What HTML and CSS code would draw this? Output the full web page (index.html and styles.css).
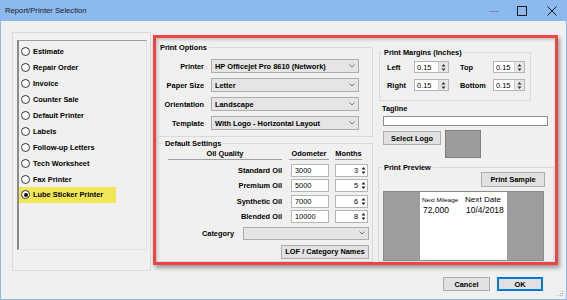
FILE: index.html
```html
<!DOCTYPE html>
<html lang="en">
<head>
    <meta charset="UTF-8">
    <title>Report/Printer Selection</title>
    <link rel="stylesheet" href="styles.css">
</head>
<body>

<div class="window">
    <div class="titlebar">
        <span class="title">Report/Printer Selection</span>
        <span class="ctl ctl-min"><svg width="10" height="10" viewBox="0 0 10 10"><path d="M0 5.5H10" stroke="#6f8fb8" stroke-width="1"/></svg></span>
        <span class="ctl"><svg width="10" height="10" viewBox="0 0 10 10"><rect x="0.5" y="0.5" width="9" height="9" fill="none" stroke="#1a1a1a" stroke-width="1"/></svg></span>
        <span class="ctl ctl-close"><svg width="10" height="10" viewBox="0 0 10 10"><path d="M0.5 0.5L9.5 9.5M9.5 0.5L0.5 9.5" stroke="#1a1a1a" stroke-width="1"/></svg></span>
    </div>

    <div class="client">
        <div class="main">
            <!-- report list -->
            <div class="report-group">
                <ul class="report-list">
                    <li><span class="radio"></span>Estimate</li>
                    <li><span class="radio"></span>Repair Order</li>
                    <li><span class="radio"></span>Invoice</li>
                    <li><span class="radio"></span>Counter Sale</li>
                    <li><span class="radio"></span>Default Printer</li>
                    <li><span class="radio"></span>Labels</li>
                    <li><span class="radio"></span>Follow-up Letters</li>
                    <li><span class="radio"></span>Tech Worksheet</li>
                    <li><span class="radio"></span>Fax Printer</li>
                    <li class="highlight"><span class="radio checked"></span>Lube Sticker Printer</li>
                </ul>
            </div>

            <!-- options panel (marked in red) -->
            <div class="options-panel">
                <div class="col-left">
                    <fieldset class="group print-options">
                        <legend>Print Options</legend>
                        <div class="po-grid">
                            <label>Printer</label>
                            <div class="select">HP Officejet Pro 8610 (Network)<svg class="chev" width="6" height="4" viewBox="0 0 6 4"><path d="M0.5 0.5L3 3L5.5 0.5" fill="none" stroke="#666" stroke-width="0.9"/></svg></div>
                            <label>Paper Size</label>
                            <div class="select">Letter<svg class="chev" width="6" height="4" viewBox="0 0 6 4"><path d="M0.5 0.5L3 3L5.5 0.5" fill="none" stroke="#666" stroke-width="0.9"/></svg></div>
                            <label>Orientation</label>
                            <div class="select">Landscape<svg class="chev" width="6" height="4" viewBox="0 0 6 4"><path d="M0.5 0.5L3 3L5.5 0.5" fill="none" stroke="#666" stroke-width="0.9"/></svg></div>
                            <label>Template</label>
                            <div class="select">With Logo - Horizontal Layout<svg class="chev" width="6" height="4" viewBox="0 0 6 4"><path d="M0.5 0.5L3 3L5.5 0.5" fill="none" stroke="#666" stroke-width="0.9"/></svg></div>
                        </div>
                    </fieldset>

                    <fieldset class="group defaults">
                        <legend>Default Settings</legend>
                        <div class="oil-grid">
                            <div class="head head-oil">Oil Quality</div>
                            <div class="head head-odo">Odometer</div>
                            <div class="head head-mo">Months</div>

                            <label>Standard Oil</label>
                            <div class="field odo">3000</div>
                            <div class="field months">3<svg class="spin" width="5" height="9" viewBox="0 0 5 9"><path d="M2.5 1L4.5 3.4H0.5Z M2.5 8L4.5 5.6H0.5Z" fill="#222"/></svg></div>

                            <label>Premium Oil</label>
                            <div class="field odo">5000</div>
                            <div class="field months">5<svg class="spin" width="5" height="9" viewBox="0 0 5 9"><path d="M2.5 1L4.5 3.4H0.5Z M2.5 8L4.5 5.6H0.5Z" fill="#222"/></svg></div>

                            <label>Synthetic Oil</label>
                            <div class="field odo">7000</div>
                            <div class="field months">6<svg class="spin" width="5" height="9" viewBox="0 0 5 9"><path d="M2.5 1L4.5 3.4H0.5Z M2.5 8L4.5 5.6H0.5Z" fill="#222"/></svg></div>

                            <label>Blended Oil</label>
                            <div class="field odo">10000</div>
                            <div class="field months">8<svg class="spin" width="5" height="9" viewBox="0 0 5 9"><path d="M2.5 1L4.5 3.4H0.5Z M2.5 8L4.5 5.6H0.5Z" fill="#222"/></svg></div>
                        </div>
                        <div class="category-row">
                            <label>Category</label>
                            <div class="select select-category"><svg class="chev" width="6" height="4" viewBox="0 0 6 4"><path d="M0.5 0.5L3 3L5.5 0.5" fill="none" stroke="#666" stroke-width="0.9"/></svg></div>
                        </div>
                        <div class="button-row">
                            <button class="btn btn-lof">LOF / Category Names</button>
                        </div>
                    </fieldset>
                </div>

                <div class="col-right">
                    <fieldset class="group margins">
                        <legend>Print Margins (Inches)</legend>
                        <div class="margin-grid">
                            <label>Left</label>
                            <div class="spinbox m-left">0.15<span class="spinner"><svg width="5" height="9" viewBox="0 0 5 9"><path d="M2.5 1L4.5 3.4H0.5Z M2.5 8L4.5 5.6H0.5Z" fill="#333"/></svg></span></div>
                            <label class="pad">Top</label>
                            <div class="spinbox m-right">0.15<span class="spinner"><svg width="5" height="9" viewBox="0 0 5 9"><path d="M2.5 1L4.5 3.4H0.5Z M2.5 8L4.5 5.6H0.5Z" fill="#333"/></svg></span></div>
                            <label>Right</label>
                            <div class="spinbox m-left">0.15<span class="spinner"><svg width="5" height="9" viewBox="0 0 5 9"><path d="M2.5 1L4.5 3.4H0.5Z M2.5 8L4.5 5.6H0.5Z" fill="#333"/></svg></span></div>
                            <label class="pad">Bottom</label>
                            <div class="spinbox m-right">0.15<span class="spinner"><svg width="5" height="9" viewBox="0 0 5 9"><path d="M2.5 1L4.5 3.4H0.5Z M2.5 8L4.5 5.6H0.5Z" fill="#333"/></svg></span></div>
                        </div>
                    </fieldset>

                    <div class="tagline-label">Tagline</div>
                    <div class="textbox tagline"></div>

                    <div class="logo-row">
                        <button class="btn btn-logo">Select Logo</button>
                        <div class="logo-box"></div>
                    </div>

                    <fieldset class="group preview">
                        <legend>Print Preview</legend>
                        <div class="button-row sample-row">
                            <button class="btn btn-sample">Print Sample</button>
                        </div>
                        <div class="preview-area">
                            <div class="sticker">
                                <span class="st-small">Next Mileage</span>
                                <span class="st-head">Next Date</span>
                                <span class="st-val">72,000</span>
                                <span class="st-val">10/4/2018</span>
                            </div>
                        </div>
                    </fieldset>
                </div>
            </div>
        </div>

        <div class="actions">
            <button class="btn btn-action">Cancel</button>
            <button class="btn btn-action btn-default">OK</button>
        </div>
    </div>

    <svg class="grip" width="6" height="6" viewBox="0 0 6 6"><rect x="4" y="0" width="1" height="1" fill="#a8a8a8"/><rect x="2" y="2" width="1" height="1" fill="#a8a8a8"/><rect x="4" y="2" width="1" height="1" fill="#a8a8a8"/><rect x="0" y="4" width="1" height="1" fill="#a8a8a8"/><rect x="2" y="4" width="1" height="1" fill="#a8a8a8"/><rect x="4" y="4" width="1" height="1" fill="#a8a8a8"/></svg>
</div>

</body>
</html>
```

FILE: styles.css
```css
body {
    margin: 0;
    background-color: #f0f0f0;
}
.window {
    position: relative;
    width: 567px;
    height: 300px;
    box-sizing: border-box;
    border: 1px solid #8fb6e8;
    border-top: none;
    background-color: #f0f0f0;
    font-family: "Liberation Sans", Arial, sans-serif;
    font-size: 7.4px;
    color: #000;
    display: flex;
    flex-direction: column;
    overflow: hidden;
}
.titlebar {
    height: 21px;
    margin: 0 -1px;
    background-color: #8cb9ee;
    display: flex;
    align-items: center;
}
.title {
    flex: 1;
    padding-left: 5px;
    font-size: 7.7px;
    color: #1b1b1b;
}
.ctl {
    width: 28px;
    height: 21px;
    display: flex;
    align-items: center;
    justify-content: center;
}
.ctl-close {
    width: 31px;
}

.client {
    flex: 1;
    display: flex;
    flex-direction: column;
    padding-left: 11px;
}
.main {
    display: flex;
    align-items: flex-start;
    gap: 2px;
}

/* report list */
.report-group {
    width: 139px;
    height: 239px;
    margin-top: 11px;
    box-sizing: border-box;
    border: 1px solid #dadada;
    padding: 7px 0 0 4px;
}
.report-list {
    width: 130px;
    height: 210px;
    box-sizing: border-box;
    margin: 0;
    padding: 3px 0 0 0;
    list-style: none;
    border: 1px solid;
    border-color: #9a9a9a #e2e2e2 #e2e2e2 #8a8a8a;
    border-left-width: 2px;
    font-weight: bold;
}
.report-list li {
    height: 15.9px;
    display: flex;
    align-items: center;
    padding-left: 2px;
}
.report-list li.highlight {
    width: 95px;
    background-color: #f1e655;
}
.radio {
    width: 9px;
    height: 9px;
    box-sizing: border-box;
    border: 1px solid #333;
    border-radius: 50%;
    background-color: #fff;
    margin-right: 3px;
    display: flex;
    align-items: center;
    justify-content: center;
}
.radio.checked::after {
    content: "";
    width: 4px;
    height: 4px;
    border-radius: 50%;
    background-color: #111;
}

/* red marked panel */
.options-panel {
    width: 405px;
    height: 230px;
    margin-top: 14px;
    box-sizing: border-box;
    border: 3px solid #f04444;
    box-shadow: 2px 3px 4px rgba(0, 0, 0, 0.35), inset 2px 2px 3px rgba(0, 0, 0, 0.18);
    padding: 5px 0 0 1px;
    display: flex;
    gap: 5px;
    overflow: hidden;
}
.col-left {
    width: 216px;
    display: flex;
    flex-direction: column;
}
.col-right {
    width: 174px;
    display: flex;
    flex-direction: column;
}

.group {
    margin: 0;
    padding: 0;
    min-width: 0;
    border: 1px solid #d9d9d9;
}
.group legend {
    padding: 0 2px;
    margin-left: 0;
    line-height: 9px;
    font-weight: bold;
}
label {
    font-weight: bold;
}

.po-grid {
    display: grid;
    grid-template-columns: 46px 148px;
    column-gap: 7px;
    row-gap: 5px;
    padding: 7px 0 6px 0;
    align-items: center;
}
.po-grid label {
    text-align: right;
}
.select {
    height: 14px;
    box-sizing: border-box;
    border: 1px solid #adadad;
    background-color: #e5e5e5;
    display: flex;
    align-items: center;
    padding: 0 3px 0 3px;
    font-weight: bold;
}
.chev {
    margin-left: auto;
}

.defaults {
    margin-top: 2px;
    flex: 1;
    padding-right: 3px;
}
.defaults legend {
    margin-left: 5px;
}
.oil-grid {
    display: grid;
    grid-template-columns: 119px 45px 37px;
    row-gap: 2.3px;
    padding: 1px 0 0 10px;
    align-items: center;
}
.oil-grid label {
    text-align: right;
    padding-right: 5px;
}
.head {
    font-weight: bold;
    line-height: 9px;
    padding-bottom: 1px;
    border-bottom: 1px solid #a0a0a0;
    text-align: center;
    margin-bottom: 1.7px;
}
.head-oil {
    margin-right: 5px;
}
.head-odo {
    margin-left: 2px;
    margin-right: 3px;
}
.head-mo {
    margin-left: 3px;
    margin-right: 7px;
}
.field {
    height: 13px;
    box-sizing: border-box;
    border: 1px solid #b5b5b5;
    background-color: #fff;
    display: flex;
    align-items: center;
}
.odo {
    width: 38px;
    margin-left: 4px;
    padding-left: 3px;
}
.months {
    width: 33px;
    margin-left: 3px;
    justify-content: flex-end;
    padding-right: 1px;
}
.spin {
    margin-left: 3px;
}
.category-row {
    display: flex;
    justify-content: flex-end;
    align-items: center;
    gap: 9px;
    margin-top: 4px;
}
.select-category {
    width: 126px;
    height: 13px;
}
.button-row {
    display: flex;
    justify-content: flex-end;
}

.btn {
    height: 14px;
    box-sizing: border-box;
    border: 1px solid #adadad;
    background-color: #e1e1e1;
    font-family: inherit;
    font-size: 7.4px;
    font-weight: bold;
    color: #000;
    padding: 0;
}
.btn-lof {
    width: 88px;
    margin-top: 5px;
}

/* right column */
.margins {
    width: 150px;
    margin-top: 5px;
    margin-left: 1px;
}
.margins legend {
    margin-left: 2px;
}
.margin-grid {
    display: grid;
    grid-template-columns: 27px 35px 44px 32px;
    row-gap: 6px;
    padding: 4px 0 9px 7px;
    align-items: center;
}
.margin-grid .pad {
    padding-left: 11px;
}
.spinbox {
    height: 12px;
    box-sizing: border-box;
    border: 1px solid #b5b5b5;
    background-color: #fff;
    display: flex;
    align-items: center;
    padding-left: 2px;
}
.spinner {
    margin-left: auto;
    width: 9px;
    height: 10px;
    background-color: #e6e6e6;
    border-left: 1px solid #d0d0d0;
    display: flex;
    align-items: center;
    justify-content: center;
}
.tagline-label {
    font-weight: bold;
    line-height: 9px;
    margin-top: 3px;
    padding-left: 4px;
}
.textbox {
    height: 12px;
    box-sizing: border-box;
    border: 1px solid #8e8e8e;
    background-color: #fff;
}
.tagline {
    width: 165px;
    margin: 3px 0 0 5px;
}
.logo-row {
    display: flex;
    align-items: flex-start;
    gap: 4px;
    margin: 4px 0 0 5px;
}
.btn-logo {
    width: 58px;
    margin-top: 1px;
}
.logo-box {
    width: 36px;
    height: 28px;
    box-sizing: border-box;
    border: 1px solid #7d7d7d;
    background-color: #9c9c9c;
}

.preview {
    width: 174px;
    margin-top: 5px;
    flex: 1;
}
.preview legend {
    margin-left: 3px;
}
.sample-row {
    padding-right: 8px;
}
.btn-sample {
    width: 64px;
    height: 15px;
}
.preview-area {
    width: 161px;
    height: 70px;
    margin: 4px 0 0 4px;
    box-sizing: border-box;
    border: 1px solid #8a8a8a;
    background-color: #9d9d9d;
    display: flex;
    justify-content: center;
}
.sticker {
    width: 87px;
    background-color: #fff;
    display: grid;
    grid-template-columns: 43px auto;
    align-content: start;
    align-items: baseline;
    padding: 3px 0 0 2px;
    box-sizing: border-box;
}
.st-small {
    font-size: 6.2px;
}
.st-head {
    font-size: 8.1px;
}
.st-val {
    font-size: 8.5px;
    padding-left: 1px;
    margin-top: 1px;
}

/* dialog buttons */
.actions {
    display: flex;
    justify-content: flex-end;
    gap: 7px;
    margin-top: 6px;
    padding-right: 23px;
}
.btn-action {
    width: 47px;
}
.btn-default {
    width: 46px;
    border: 1px solid #0078d7;
    box-shadow: inset 0 0 0 1px #0078d7;
}
.grip {
    position: absolute;
    right: 2px;
    bottom: 2px;
}
```
